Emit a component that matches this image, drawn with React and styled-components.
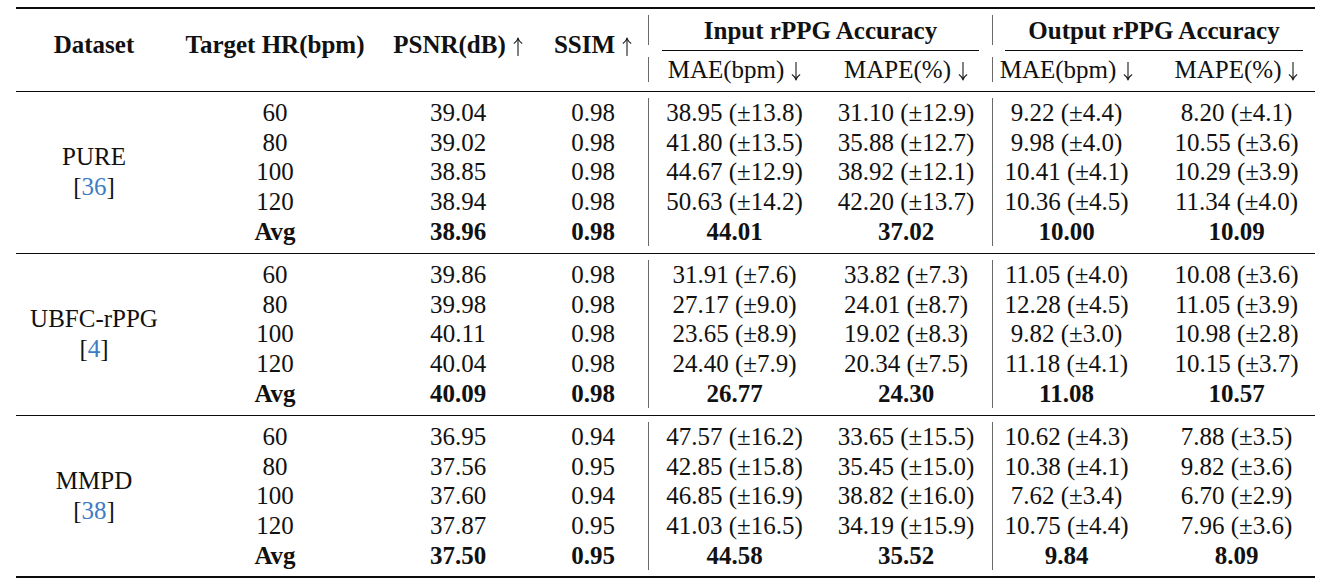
import React from 'react';
import styled, { createGlobalStyle } from 'styled-components';

const GlobalStyle = createGlobalStyle`
  html, body {
    margin: 0;
    padding: 0;
    background: #fff;
  }
  body {
    font-family: "Liberation Serif", "Times New Roman", serif;
    color: #111;
  }
`;

const groups = [
  {
    name: 'PURE',
    cite: '36',
    rows: [
      ['60', '39.04', '0.98', '38.95 (±13.8)', '31.10 (±12.9)', '9.22 (±4.4)', '8.20 (±4.1)'],
      ['80', '39.02', '0.98', '41.80 (±13.5)', '35.88 (±12.7)', '9.98 (±4.0)', '10.55 (±3.6)'],
      ['100', '38.85', '0.98', '44.67 (±12.9)', '38.92 (±12.1)', '10.41 (±4.1)', '10.29 (±3.9)'],
      ['120', '38.94', '0.98', '50.63 (±14.2)', '42.20 (±13.7)', '10.36 (±4.5)', '11.34 (±4.0)'],
    ],
    avg: ['Avg', '38.96', '0.98', '44.01', '37.02', '10.00', '10.09'],
  },
  {
    name: 'UBFC-rPPG',
    cite: '4',
    rows: [
      ['60', '39.86', '0.98', '31.91 (±7.6)', '33.82 (±7.3)', '11.05 (±4.0)', '10.08 (±3.6)'],
      ['80', '39.98', '0.98', '27.17 (±9.0)', '24.01 (±8.7)', '12.28 (±4.5)', '11.05 (±3.9)'],
      ['100', '40.11', '0.98', '23.65 (±8.9)', '19.02 (±8.3)', '9.82 (±3.0)', '10.98 (±2.8)'],
      ['120', '40.04', '0.98', '24.40 (±7.9)', '20.34 (±7.5)', '11.18 (±4.1)', '10.15 (±3.7)'],
    ],
    avg: ['Avg', '40.09', '0.98', '26.77', '24.30', '11.08', '10.57'],
  },
  {
    name: 'MMPD',
    cite: '38',
    rows: [
      ['60', '36.95', '0.94', '47.57 (±16.2)', '33.65 (±15.5)', '10.62 (±4.3)', '7.88 (±3.5)'],
      ['80', '37.56', '0.95', '42.85 (±15.8)', '35.45 (±15.0)', '10.38 (±4.1)', '9.82 (±3.6)'],
      ['100', '37.60', '0.94', '46.85 (±16.9)', '38.82 (±16.0)', '7.62 (±3.4)', '6.70 (±2.9)'],
      ['120', '37.87', '0.95', '41.03 (±16.5)', '34.19 (±15.9)', '10.75 (±4.4)', '7.96 (±3.6)'],
    ],
    avg: ['Avg', '37.50', '0.95', '44.58', '35.52', '9.84', '8.09'],
  },
];

// column widths, left to right
const widths = [156, 206, 160, 110, 172, 172, 148, 175];
// columns that carry a vertical line on their left side (0-based, over the 8 columns)
const dividers = [4, 6];

const Page = styled.div`
  padding: 7px 0 0 16px;
`;

const Table = styled.table`
  width: 1299px;
  table-layout: fixed;
  border-collapse: separate;
  border-spacing: 0;
  font-size: 25px;
  line-height: 1;
`;

const Col = styled.col`
  width: ${(p) => p.$w}px;
`;

const RuleCell = styled.td`
  padding: ${(p) => p.$top}px 0 ${(p) => p.$bottom}px;
  font-size: 0;
  line-height: 0;
`;

const Line = styled.div`
  height: ${(p) => p.$weight}px;
  background: #0c0c0c;
  margin: 0 ${(p) => p.$right || 0}px 0 ${(p) => p.$left || 0}px;
`;

const HeadRow = styled.tr`
  height: ${(p) => p.$h}px;
`;

const HeadCell = styled.th`
  padding: 0 0 ${(p) => p.$lift || 0}px ${(p) => p.$shift || 0}px;
  font-weight: ${(p) => (p.$bold ? 700 : 400)};
  text-align: center;
  vertical-align: middle;
  white-space: nowrap;
  border-left: ${(p) => (p.$divider ? '1px solid #6a6a6a' : 'none')};
`;

const ArrowSvg = styled.svg`
  display: inline-block;
  width: 10px;
  height: 19px;
  margin-left: 7px;
  vertical-align: -3px;
`;

const Arrow = ({ down }) => (
  <ArrowSvg viewBox="0 0 10 19" aria-hidden="true">
    <g
      transform={down ? 'rotate(180 5 9.5)' : undefined}
      fill="none"
      stroke="#1a1a1a"
      strokeWidth="1.1"
      strokeLinecap="round"
    >
      <path d="M5 1.5 V18.5" />
      <path d="M1.2 6.2 Q4 4.2 5 1.5 Q6 4.2 8.8 6.2" />
    </g>
  </ArrowSvg>
);

const DataRow = styled.tr`
  height: 29.6px;
`;

const Cell = styled.td`
  padding: 0 0 0 ${(p) => p.$shift || 0}px;
  text-align: center;
  vertical-align: middle;
  white-space: nowrap;
  font-weight: ${(p) => (p.$bold ? 700 : 400)};
  border-left: ${(p) => (p.$divider ? '1px solid #6a6a6a' : 'none')};
`;

const DatasetCell = styled.td`
  padding: 0;
  text-align: center;
  vertical-align: middle;
  line-height: 30px;
`;

const Cite = styled.span`
  color: #3d7cc4;
`;

const Rule = ({ top, bottom, weight }) => (
  <tr>
    <RuleCell colSpan={8} $top={top} $bottom={bottom}>
      <Line $weight={weight} />
    </RuleCell>
  </tr>
);

const DataLine = ({ values, bold, lead }) => (
  <DataRow>
    {lead}
    {values.map((v, i) => {
      const col = i + 1;
      return (
        <Cell
          key={col}
          $bold={bold}
          $divider={dividers.includes(col)}
          $shift={col === 7 ? 18 : 0}
        >
          {v}
        </Cell>
      );
    })}
  </DataRow>
);

const Group = ({ group }) => (
  <>
    {group.rows.map((r, i) => (
      <DataLine
        key={i}
        values={r}
        lead={
          i === 0 ? (
            <DatasetCell rowSpan={5}>
              {group.name}
              <br />[<Cite>{group.cite}</Cite>]
            </DatasetCell>
          ) : null
        }
      />
    ))}
    <DataLine values={group.avg} bold />
  </>
);

export default function App() {
  return (
    <Page>
      <GlobalStyle />
      <Table>
        <colgroup>
          {widths.map((w, i) => (
            <Col key={i} $w={w} />
          ))}
        </colgroup>
        <thead>
          <Rule top={0} bottom={6} weight={2} />
          <HeadRow $h={30}>
            <HeadCell rowSpan={3} $bold $lift={8}>Dataset</HeadCell>
            <HeadCell rowSpan={3} $bold $lift={8}>Target HR(bpm)</HeadCell>
            <HeadCell rowSpan={3} $bold $lift={8}>
              PSNR(dB)<Arrow />
            </HeadCell>
            <HeadCell rowSpan={3} $bold $lift={8}>
              SSIM<Arrow />
            </HeadCell>
            <HeadCell colSpan={2} $bold $divider>Input rPPG Accuracy</HeadCell>
            <HeadCell colSpan={2} $bold $divider>Output rPPG Accuracy</HeadCell>
          </HeadRow>
          <tr>
            <RuleCell colSpan={2} $top={5} $bottom={6}>
              <Line $weight={1} $left={14} $right={13} />
            </RuleCell>
            <RuleCell colSpan={2} $top={5} $bottom={6}>
              <Line $weight={1} $left={13} $right={12} />
            </RuleCell>
          </tr>
          <HeadRow $h={25}>
            <HeadCell $divider>
              MAE(bpm)<Arrow down />
            </HeadCell>
            <HeadCell>
              MAPE(%)<Arrow down />
            </HeadCell>
            <HeadCell $divider>
              MAE(bpm)<Arrow down />
            </HeadCell>
            <HeadCell $shift={18}>
              MAPE(%)<Arrow down />
            </HeadCell>
          </HeadRow>
          <Rule top={9} bottom={6} weight={1} />
        </thead>
        <tbody>
          {groups.map((g, i) => (
            <React.Fragment key={g.name}>
              <Group group={g} />
              {i < groups.length - 1 ? (
                <Rule top={7} bottom={6} weight={1} />
              ) : (
                <Rule top={6} bottom={0} weight={2} />
              )}
            </React.Fragment>
          ))}
        </tbody>
      </Table>
    </Page>
  );
}
